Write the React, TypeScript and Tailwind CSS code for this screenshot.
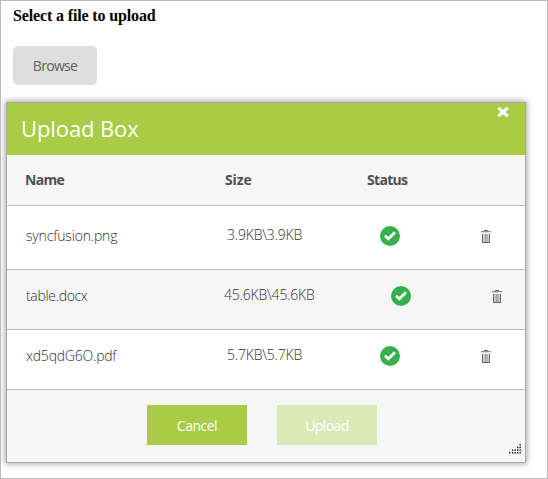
type FileRow = {
  name: string;
  size: string;
  row: string;
  nameClass: string;
  sizeClass: string;
  shift: string;
};

const files: FileRow[] = [
  { name: "syncfusion.png", size: "3.9KB\\3.9KB", row: "h-16 bg-white pb-[3px]", nameClass: "tracking-[-0.17px]", sizeClass: "pl-[2px]", shift: "" },
  { name: "table.docx", size: "45.6KB\\45.6KB", row: "h-[60px] bg-[#f6f6f6] pb-[7px]", nameClass: "tracking-[-0.33px]", sizeClass: "-ml-px", shift: "translate-x-[11px]" },
  { name: "xd5qdG6O.pdf", size: "5.7KB\\5.7KB", row: "h-[60px] bg-white pb-[7px]", nameClass: "tracking-[-0.22px]", sizeClass: "pl-[2px]", shift: "" },
];

function Check() {
  return (
    <svg width="20" height="20" viewBox="0 0 20 20">
      <circle cx="10" cy="10" r="10" fill="#36b04c" />
      <path d="M5 9.7 8.4 12.8 15 6.3" fill="none" stroke="#fff" strokeWidth="2.7" />
    </svg>
  );
}

function Trash() {
  return (
    <svg width="10" height="14" viewBox="0 0 10 14" fill="#6b6b6b">
      <path d="M3 1h4v1H3zM0 2.2h10v1.1H0zM1 5h1.3v9H1zM3.6 5h1v8h-1zM5.5 5h1v8h-1zM7.7 5H9v9H7.7zM1 13h8v1H1z" />
    </svg>
  );
}

function Grip() {
  const dots = [
    [10.5, 0], [8, 2.7], [10.5, 2.7], [3, 5.4], [5.5, 5.4], [8, 5.4], [10.5, 5.4],
    [0, 8.1], [3, 8.1], [5.5, 8.1], [8, 8.1], [10.5, 8.1],
  ];
  return (
    <svg width="12" height="10" viewBox="0 0 12 10" className="absolute right-[4px] bottom-[8px]">
      {dots.map(([x, y]) => (
        <rect key={`${x}-${y}`} x={x} y={y} width="1.4" height="1.5" fill="#1c1c1c" />
      ))}
    </svg>
  );
}

export default function App() {
  return (
    <main className="h-[479px] w-[548px] overflow-hidden border border-[#bdbdbd] bg-white font-['Open_Sans','Noto_Sans',sans-serif] text-[14px] font-light text-[#303030]">
      <h1 className="ml-3 h-[45px] pt-[5px] font-['Liberation_Serif',serif] text-[16px] leading-5 font-bold tracking-[-0.14px] text-black">
        Select a file to upload
      </h1>
      <button className="ml-3 flex h-[39px] w-[84px] items-center justify-center rounded-[5px] bg-[#dedede] pb-px font-normal tracking-[-0.7px] text-[#606060]">
        Browse
      </button>
      <section className="mt-[17px] ml-[5px] h-[361px] w-[520px] border border-[#aaa] shadow-[0_0_6px_1px_rgba(0,0,0,0.35)]">
        <header className="flex h-[52px] items-start justify-between bg-[#a9cb46] pr-4 pl-[14px] text-white">
          <h2 className="pt-[9px] text-[22px] leading-8 font-normal tracking-[-0.1px]">Upload Box</h2>
          <svg width="12" height="10" viewBox="0 0 12 10" className="mt-1">
            <path d="M1.3 0.8 10.7 9.2M10.7 0.8 1.3 9.2" stroke="#fff" strokeWidth="3" />
          </svg>
        </header>
        <div className="grid h-[51px] grid-cols-[199px_142px_1fr] items-center border-b border-[#bdbdbd] bg-[#f6f6f6] pb-px pl-[18px] font-bold tracking-[-0.7px] text-[#505050]">
          <span>Name</span>
          <span className="pl-px tracking-[-0.1px]">Size</span>
          <span className="pl-px">Status</span>
        </div>
        {files.map((f) => (
          <div key={f.name} className={`grid grid-cols-[199px_142px_1fr] items-center border-b border-[#bdbdbd] pl-[19px] ${f.row}`}>
            <span className={`pb-[2px] ${f.nameClass}`}>{f.name}</span>
            <span className={`pb-[4px] tracking-[-0.2px] ${f.sizeClass}`}>{f.size}</span>
            <span className={`flex items-center justify-between pr-[34px] pl-[13px] ${f.shift}`}>
              <Check />
              <Trash />
            </span>
          </div>
        ))}
        <footer className="relative flex h-[72px] gap-[30px] bg-[#f6f6f6] pt-[15px] pl-[140px] text-white">
          <button className="h-10 w-[100px] bg-[#a9cb46] pt-px font-normal tracking-[-0.5px]">Cancel</button>
          <button className="h-10 w-[100px] bg-[#dbe9b8] pt-px font-normal tracking-[-0.6px]">Upload</button>
          <Grip />
        </footer>
      </section>
    </main>
  );
}
